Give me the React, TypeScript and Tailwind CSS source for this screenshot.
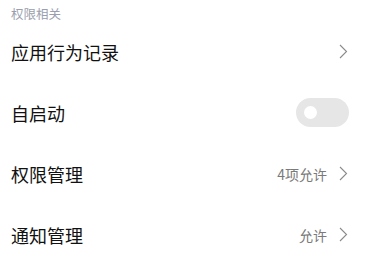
const font = { fontFamily: '"Noto Sans CJK SC", "Noto Sans", sans-serif' }

function Chevron() {
  return (
    <svg width="9" height="15" viewBox="0 0 9 15" className="shrink-0">
      <path d="M1 1 L7.5 7.5 L1 14" fill="none" stroke="#8a8a8a" strokeWidth="1.1" />
    </svg>
  )
}

function Row({ title, value, toggle }: { title: string; value?: string; toggle?: boolean }) {
  return (
    <div className="h-[61px] flex items-center justify-between pl-[11px] pr-[17px]">
      <span className="text-[18px] leading-none text-[#111111]">{title}</span>
      {toggle ? (
        <div className="w-[53px] h-[29px] rounded-full bg-[#e6e6e6] flex items-center pl-[8px] -mr-[1px]">
          <div className="w-[13px] h-[13px] rounded-full bg-white" />
        </div>
      ) : (
        <div className="flex items-center gap-[12px]">
          {value && <span className="text-[14px] leading-none text-[#7a7a7a]">{value}</span>}
          <Chevron />
        </div>
      )}
    </div>
  )
}

export default function App() {
  return (
    <div className="w-[365px] h-[264px] bg-white overflow-hidden" style={font}>
      <div className="h-[21px] pt-[7px] pl-[11px]">
        <span className="block text-[12.5px] leading-[13px] text-[#9a9eae]">权限相关</span>
      </div>
      <Row title="应用行为记录" />
      <Row title="自启动" toggle />
      <Row title="权限管理" value="4项允许" />
      <Row title="通知管理" value="允许" />
    </div>
  )
}
